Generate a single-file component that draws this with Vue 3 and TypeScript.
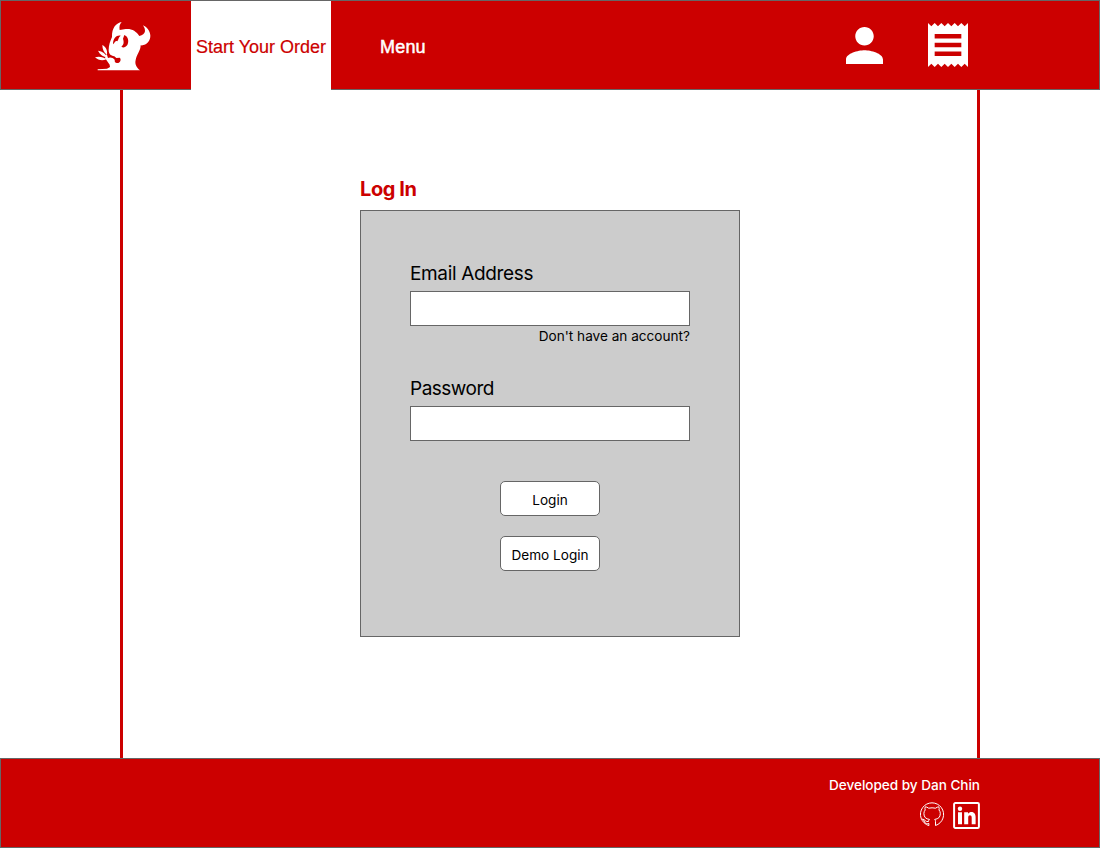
<script setup lang="ts">
import { ref } from 'vue'

const email = ref<string>('')
const password = ref<string>('')
</script>

<template>
  <div class="page">
    <header class="bar header">
      <a class="logo" aria-label="Home">
        <svg width="56" height="50" viewBox="30 33 168 150" fill="#fff">
          <path d="M110 36C94 39 80 53 81 81C76 92 71 106 71 120C71 132 77 137 88 139L94 144L104 143C109 147 107 156 100 159C93 161 90 154 84 157C80 153 75 151 72 154L75 171L66 176L38 178V181H165C154 172 149 162 152 150C155 134 167 122 167 106C184 108 197 92 196 76C194 60 185 51 174 46C183 59 184 74 163 78C154 63 139 55 122 57L104 60C102 50 104 43 110 36Z" />
          <path fill="#c00" d="M84 103C84 84 96 74 107 77C100 82 101 89 97 94C92 90 90 97 84 103ZM118 75C129 79 133 93 127 105C121 113 113 115 109 109C115 106 118 98 114 86Z" />
          <path d="M52 105C63 111 68 121 66 134C57 128 52 118 52 105ZM39 122C53 124 62 131 67 142C55 141 45 134 39 122ZM30 142C44 138 56 142 64 148C52 154 40 151 30 142ZM65 131L69 144C75 140 84 143 89 149L90 160L73 163L60 144Z" />
        </svg>
      </a>
      <a class="tab">Start Your Order</a>
      <a class="menu">Menu</a>
      <nav class="icons">
        <svg width="37" height="37" viewBox="4 4 16 16" fill="#fff">
          <path d="M12 12c2.21 0 4-1.79 4-4s-1.79-4-4-4-4 1.79-4 4 1.79 4 4 4zm0 2c-2.67 0-8 1.34-8 4v2h16v-2c0-2.66-5.33-4-8-4z" />
        </svg>
        <svg width="40" height="44" viewBox="3 2 18 20" preserveAspectRatio="none" fill="#fff">
          <path d="M18 17H6v-2h12v2zm0-4H6v-2h12v2zm0-4H6V7h12v2zM3 22l1.5-1.5L6 22l1.5-1.5L9 22l1.5-1.5L12 22l1.5-1.5L15 22l1.5-1.5L18 22l1.5-1.5L21 22V2l-1.5 1.5L18 2l-1.5 1.5L15 2l-1.5 1.5L12 2l-1.5 1.5L9 2 7.500 3.500 6 2 4.500 3.500 3 2v20z" />
        </svg>
      </nav>
    </header>

    <main class="content">
      <section class="login">
        <h1>Log In</h1>
        <form class="card" @submit.prevent>
          <label for="email">Email Address</label>
          <input id="email" v-model="email" type="text" />
          <a class="signup">Don't have an account?</a>
          <label class="password-label" for="password">Password</label>
          <input id="password" v-model="password" type="password" />
          <button class="first" type="submit">Login</button>
          <button type="button">Demo Login</button>
        </form>
      </section>
    </main>

    <footer class="bar footer">
      <p>Developed by Dan Chin</p>
      <div class="social">
        <svg width="26" height="26" viewBox="0 0 26 26" fill="none" stroke="#fff" stroke-width="1" stroke-linejoin="round" stroke-linecap="round">
          <path d="M9.500 23.500A11.600 11.600 0 1 1 16.500 23.500V19.300Q16.500 18 15.700 17.400C19.500 16.900 21.300 15.200 21.300 11.400Q21.300 9.400 20 8Q20.500 6.500 19.800 4.800Q18.400 4.900 16.500 6.200Q13 5.400 9.700 6.200Q7.700 4.800 6.300 4.800Q5.600 6.500 6.200 8Q4.900 9.500 4.900 11.500C4.900 15.200 6.900 17 10.500 17.400Q9.600 18 9.500 19.500C6.500 20.300 6 17.300 3.400 17C3.700 17.700 5.200 18.500 5.700 20.200C6.400 21.900 8 21.800 9.500 21.500Z" />
        </svg>
        <svg width="27" height="27" viewBox="0 0 27 27" fill="#fff">
          <rect x="1.100" y="1.100" width="24.800" height="24.800" rx="1.200" fill="none" stroke="#fff" stroke-width="2" />
          <circle cx="7" cy="6.800" r="2.200" />
          <path d="M5 10.200H9V22.200H5ZM11.200 10.200H15V11.800C17 8.800 22.600 9.100 22.600 14.900V22.200H18.700V15.700C18.700 12.500 15.200 12.600 15.200 15.700V22.200H11.200Z" />
        </svg>
      </div>
    </footer>
  </div>
</template>

<style>
body {
  margin: 0;
  background: #fff;
}
</style>

<style scoped>
.page {
  width: 1100px;
  height: 848px;
  display: flex;
  flex-direction: column;
  font-family: Inter, "Liberation Sans", sans-serif;
  color: #000;
}
.bar {
  box-sizing: border-box;
  height: 90px;
  flex: none;
  border: 1px solid #666;
  background: #c00;
  color: #fff;
}
.header {
  display: flex;
  font: 18px "Liberation Sans", Arial, sans-serif;
}
.logo {
  width: 56px;
  margin: 20px 40px 0 94px;
}
.logo svg, .icons svg, .social svg {
  display: block;
}
.tab, .menu {
  height: 89px;
  line-height: 93px;
  text-align: center;
  white-space: nowrap;
}
.tab {
  width: 140px;
  background: #fff;
  color: #c00;
  -webkit-text-stroke: 0.2px #c00;
}
.menu {
  margin-left: 49px;
  letter-spacing: 0.2px;
  -webkit-text-stroke: 0.5px #fff;
}
.icons {
  display: flex;
  align-items: center;
  gap: 45px;
  height: 88px;
  margin-left: auto;
  margin-right: 131px;
}
.content {
  box-sizing: border-box;
  width: 860px;
  flex: 1;
  margin: 0 auto;
  border: solid #c00;
  border-width: 0 3px;
}
.login {
  width: 380px;
  margin: 86px auto 0;
}
h1 {
  height: 34px;
  margin: 0;
  line-height: 26px;
  font-size: 20px;
  font-weight: 700;
  letter-spacing: -0.4px;
  color: #c00;
}
.card {
  box-sizing: border-box;
  height: 427px;
  padding: 49px;
  border: 1px solid #666;
  background: #ccc;
  display: flex;
  flex-direction: column;
}
label {
  height: 31px;
  line-height: 28px;
  font-size: 19px;
  letter-spacing: -0.35px;
}
.password-label {
  letter-spacing: -0.5px;
}
input {
  box-sizing: border-box;
  width: 280px;
  height: 35px;
  padding: 0 8px;
  border: 1px solid #666;
  border-radius: 0;
  outline: none;
  background: #fff;
  font: inherit;
}
.signup {
  height: 49px;
  line-height: 20px;
  text-align: right;
  font-size: 13.6px;
}
button {
  box-sizing: border-box;
  width: 100px;
  height: 35px;
  margin: 20px auto 0;
  padding: 2px 0 0;
  border: 1px solid #666;
  border-radius: 5px;
  background: #fff;
  color: #000;
  font-family: inherit;
  font-size: 13.6px;
  white-space: nowrap;
}
.first {
  margin-top: 40px;
}
.footer {
  display: flex;
  flex-direction: column;
  align-items: flex-end;
  padding: 16px 119px 0 0;
}
.footer p {
  margin: 0;
  line-height: 20px;
  font-size: 13.6px;
  font-weight: 500;
  letter-spacing: -0.04px;
}
.social {
  display: flex;
  gap: 8px;
  margin-top: 7px;
}
</style>
